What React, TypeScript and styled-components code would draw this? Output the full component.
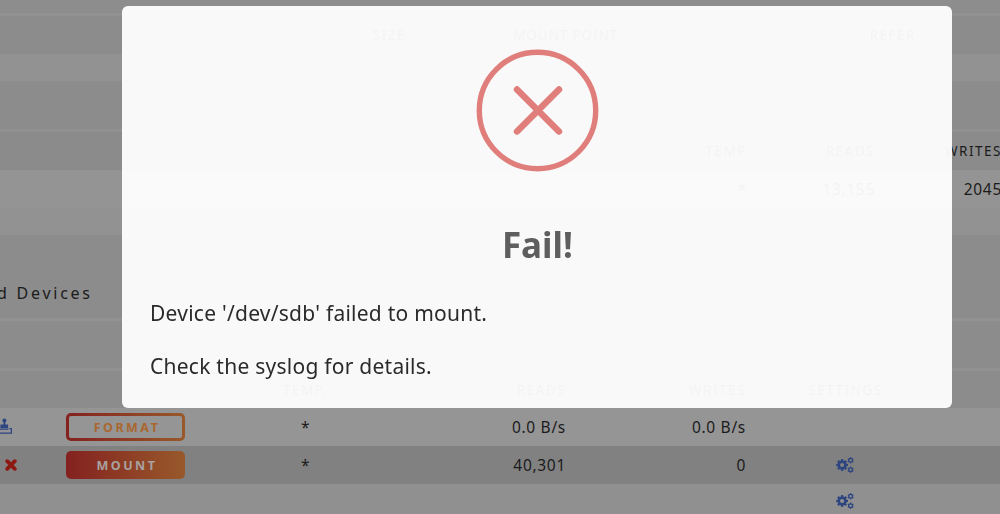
import React from 'react';
import styled, { createGlobalStyle } from 'styled-components';

const GlobalStyle = createGlobalStyle`
  body {
    margin: 0;
    overflow: hidden;
    background: #909090;
    font-family: "Noto Sans", "Open Sans", sans-serif;
    color: #1b1b1b;
  }
`;

const Page = styled.main`
  height: 514px;
  width: 1000px;
  overflow: hidden;
`;

const Band = styled.div<{ height: number; shade: string }>`
  height: ${({ height }) => height}px;
  background: ${({ shade }) => shade};
`;

const Row = styled(Band)<{ columns: string }>`
  display: grid;
  grid-template-columns: ${({ columns }) => columns};
  align-items: center;
`;

const SectionTitle = styled(Band)`
  display: flex;
  align-items: center;
  padding-top: 33px;
  box-sizing: border-box;
  font-size: 16px;
  letter-spacing: 2.75px;
  white-space: pre;
`;

const TitleText = styled.span`
  margin-left: -3px;
`;

const Cell = styled.div<{ align?: string }>`
  text-align: ${({ align }) => align || 'right'};
  font-size: 15.5px;
  letter-spacing: 0.7px;
  line-height: 22px;
  white-space: nowrap;
`;

const HeadCell = styled(Cell)`
  font-size: 13.5px;
  letter-spacing: ${({ children }) => (children === 'MOUNT POINT' ? 0.9 : 1.5)}px;
`;

const LinkIcon = styled.div`
  display: flex;
  justify-content: center;
  padding-right: 2px;
  color: #2d4580;
`;

const StartIcon = styled.div<{ offset: number }>`
  display: flex;
  align-items: center;
  padding-left: ${({ offset }) => offset}px;
`;

const ActionButton = styled.button<{ filled?: boolean }>`
  height: 28px;
  width: 119px;
  padding: 0 0 0 3px;
  border: 3px solid transparent;
  border-radius: 5px;
  background: ${({ filled }) =>
    filled
      ? 'linear-gradient(90deg, #84211f, #98592b) border-box'
      : 'linear-gradient(#959595, #959595) padding-box, linear-gradient(90deg, #84211f, #98592b) border-box'};
  color: ${({ filled }) => (filled ? '#a9a19f' : '#a9672f')};
  font-family: inherit;
  font-size: 12.5px;
  font-weight: 700;
  letter-spacing: 2.5px;
`;

const Modal = styled.section`
  position: fixed;
  top: 5.5px;
  left: 122.4px;
  width: 830px;
  height: 402.5px;
  box-sizing: border-box;
  padding: 43.5px 27.6px 0;
  border-radius: 6px;
  background: rgba(255, 255, 255, 0.95);
`;

const ErrorIcon = styled.svg`
  display: block;
  width: 123px;
  height: 123px;
  margin: 0 auto;
`;

const ModalTitle = styled.h2`
  margin: 49px 0 18px;
  text-align: center;
  font-size: 35px;
  line-height: 48px;
  font-weight: 700;
  color: #5e5e5e;
`;

const Message = styled.p`
  margin: 0;
  font-size: 21px;
  letter-spacing: 0.25px;
  line-height: 52.5px;
  color: #2a2a2a;
`;

const sizeColumns = '406px 212px 298px';
const poolColumns = '747px 128px 127px';
const deviceColumns = '66px 119px 241px 140px 180px 199px';

// centre point, outer radius and hole radius of each gear
const gears = [
  { cx: 6.1, cy: 8, r: 4.6, hole: 2.1, teeth: 8 },
  { cx: 14.6, cy: 3.3, r: 2.5, hole: 1.2, teeth: 6 },
  { cx: 14.6, cy: 12.7, r: 2.5, hole: 1.2, teeth: 6 },
];

const CogsIcon = () => (
  <svg width="18" height="16" viewBox="0 0 18 16">
    {gears.map(({ cx, cy, r, hole, teeth }) => {
      const ring = (r + hole) / 2;
      return (
        <g key={cy} fill="none" stroke="currentColor">
          <circle cx={cx} cy={cy} r={ring} strokeWidth={r - hole} />
          {Array.from({ length: teeth }, (_, i) => (
            <path
              key={i}
              d={`M${cx} ${cy - ring}V${cy - r * 1.28}`}
              strokeWidth={r * 0.5}
              transform={`rotate(${(360 / teeth) * i} ${cx} ${cy})`}
            />
          ))}
        </g>
      );
    })}
  </svg>
);

const FormatIcon = () => (
  <svg width="13" height="18" viewBox="0 0 13 18" fill="#2d4580">
    <circle cx="4.4" cy="2.5" r="2" />
    <path d="M3.5 3h1.8v3.6h2.8V10H.4V6.6h3.1z" />
    <path d="M0 11.2h8.4M9.3 10.7h2.1v4.4H0" fill="none" stroke="#2d4580" strokeWidth="1.2" />
  </svg>
);

const RemoveIcon = () => (
  <svg width="12" height="12" viewBox="0 0 12 12">
    <path d="M2.2 2.2 9.8 9.8M9.8 2.2 2.2 9.8" stroke="#8d1a12" strokeWidth="3.8" strokeLinecap="round" />
  </svg>
);

const App = () => {
  return (
    <Page>
      <GlobalStyle />
      <Band height={13} shade="#8d8d8d" />
      <Band height={3} shade="#929292" />
      <Row height={38} shade="#8c8c8c" columns={sizeColumns}>
        <HeadCell>SIZE</HeadCell>
        <HeadCell>MOUNT POINT</HeadCell>
        <HeadCell>REFER</HeadCell>
      </Row>
      <Band height={27} shade="#929292" />
      <Band height={48} shade="#8c8c8c" />
      <Band height={3} shade="#919191" />
      <Row height={38} shade="#8b8b8b" columns={poolColumns}>
        <HeadCell>TEMP</HeadCell>
        <HeadCell>READS</HeadCell>
        <HeadCell>WRITES</HeadCell>
      </Row>
      <Row height={38} shade="#949494" columns={poolColumns}>
        <Cell>*</Cell>
        <Cell>13,155</Cell>
        <Cell>2045</Cell>
      </Row>
      <Band height={27} shade="#929292" />
      <SectionTitle height={83} shade="#8c8c8c">
        <TitleText>d Devices</TitleText>
      </SectionTitle>
      <Band height={3} shade="#929292" />
      <Band height={47} shade="#8c8c8c" />
      <Band height={3} shade="#929292" />
      <Row height={37} shade="#8c8c8c" columns={deviceColumns}>
        <span />
        <span />
        <HeadCell align="center">TEMP.</HeadCell>
        <HeadCell>READS</HeadCell>
        <HeadCell>WRITES</HeadCell>
        <HeadCell align="center">SETTINGS</HeadCell>
      </Row>
      <Row height={38} shade="#959595" columns={deviceColumns}>
        <StartIcon offset={0}>
          <FormatIcon />
        </StartIcon>
        <ActionButton>FORMAT</ActionButton>
        <Cell align="center">*</Cell>
        <Cell>0.0 B/s</Cell>
        <Cell>0.0 B/s</Cell>
      </Row>
      <Row height={38} shade="#818181" columns={deviceColumns}>
        <StartIcon offset={5}>
          <RemoveIcon />
        </StartIcon>
        <ActionButton filled>MOUNT</ActionButton>
        <Cell align="center">*</Cell>
        <Cell>40,301</Cell>
        <Cell>0</Cell>
        <LinkIcon>
          <CogsIcon />
        </LinkIcon>
      </Row>
      <Row height={34} shade="#909090" columns={deviceColumns}>
        <span />
        <span />
        <span />
        <span />
        <span />
        <LinkIcon>
          <CogsIcon />
        </LinkIcon>
      </Row>

      <Modal>
        <ErrorIcon viewBox="0 0 123 123">
          <circle cx="61.5" cy="61.5" r="58.2" fill="none" stroke="#e07e7b" strokeWidth="5.4" />
          <path
            d="M41 40.5 83 82.5M83 40.5 41 82.5"
            stroke="#e07e7b"
            strokeWidth="6.5"
            strokeLinecap="round"
          />
        </ErrorIcon>
        <ModalTitle>Fail!</ModalTitle>
        <Message>Device '/dev/sdb' failed to mount.</Message>
        <Message>Check the syslog for details.</Message>
      </Modal>
    </Page>
  );
};

export default App;
